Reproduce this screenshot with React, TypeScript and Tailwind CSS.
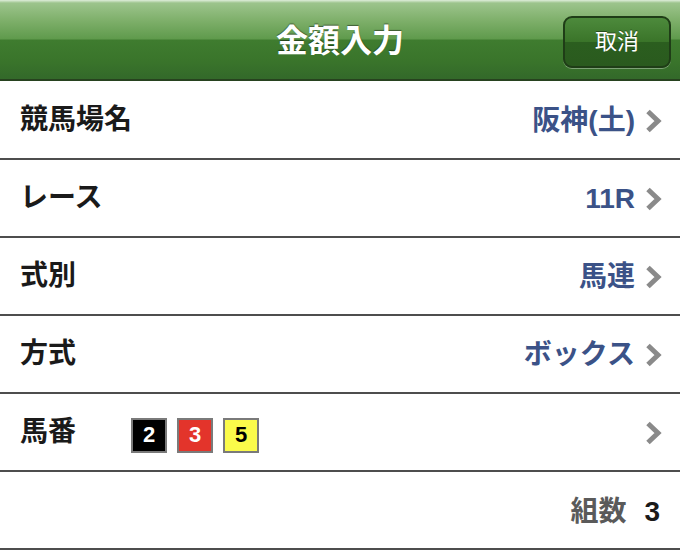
import React from "react";

const font = '"Liberation Sans", "Noto Sans CJK JP", sans-serif';

function Chevron() {
  return (
    <svg width="20" height="26" viewBox="0 0 20 26" className="ml-[9px] mt-[2px]">
      <path d="M4 3.5 L14 13 L4 22.5" fill="none" stroke="#8a8a8a" strokeWidth="5" strokeLinejoin="miter" />
    </svg>
  );
}

function Row({ label, value, children }: { label: string; value?: string; children?: React.ReactNode }) {
  return (
    <div className="h-[78px] flex items-center border-b-2 border-[#4d4d4d] pl-[20px] pr-[16px] bg-white">
      <div className="text-[28px] font-bold text-[#1a1a1a] leading-none">{label}</div>
      {children}
      <div className="flex-1" />
      {value && <div className="text-[28px] font-bold text-[#3b5287] leading-none pt-[2px]">{value}</div>}
      <Chevron />
    </div>
  );
}

export default function App() {
  return (
    <div className="w-[680px] h-[551px] bg-white overflow-hidden" style={{ fontFamily: font }}>
      <div className="h-[82px] border-b border-white">
        <div className="h-[81px] relative flex items-center justify-center border-b-2 border-[#27421f] bg-[linear-gradient(to_bottom,#dfeedb_0px,#9cc48c_3px,#7fb06b_20px,#5f9a4c_39px,#3f7c2f_40px,#3a752b_60px,#33692a_79px)]">
          <div className="text-[32px] font-bold text-white leading-none [text-shadow:0_-1px_1px_rgba(0,0,0,0.45)] pt-[2px]">金額入力</div>
          <div className="absolute left-[563px] top-[16px] w-[108px] h-[52px] rounded-[9px] border-2 border-[#1f3d17] bg-[linear-gradient(to_bottom,#4d8a3c_0%,#3a7429_50%,#2b5e1f_51%,#2a5a1e_100%)] flex items-center justify-center shadow-[0_1px_0_rgba(255,255,255,0.35)]">
            <span className="text-[22px] text-white leading-none [text-shadow:0_-1px_0_rgba(0,0,0,0.4)]">取消</span>
          </div>
        </div>
      </div>
      <Row label="競馬場名" value="阪神(土)" />
      <Row label="レース" value="11R" />
      <Row label="式別" value="馬連" />
      <Row label="方式" value="ボックス" />
      <Row label="馬番">
        <div className="flex items-center gap-[10px] ml-[55px] mt-[6px]">
          <div className="w-[36px] h-[35px] bg-black border-2 border-[#7a7a7a] flex items-center justify-center text-white font-bold text-[22px] leading-none">2</div>
          <div className="w-[36px] h-[35px] bg-[#e3342b] border-2 border-[#7a7a7a] flex items-center justify-center text-white font-bold text-[22px] leading-none">3</div>
          <div className="w-[36px] h-[35px] bg-[#fbfb4a] border-2 border-[#7a7a7a] flex items-center justify-center text-black font-bold text-[22px] leading-none">5</div>
        </div>
      </Row>
      <div className="h-[78px] flex items-center justify-end border-b-2 border-[#4d4d4d] pr-[20px] bg-white">
        <span className="text-[28px] font-bold text-[#5a5a5a] leading-none pt-[3px]">組数</span>
        <span className="text-[28px] font-bold text-[#1a1a1a] leading-none ml-[18px] pt-[3px]">3</span>
      </div>
    </div>
  );
}
